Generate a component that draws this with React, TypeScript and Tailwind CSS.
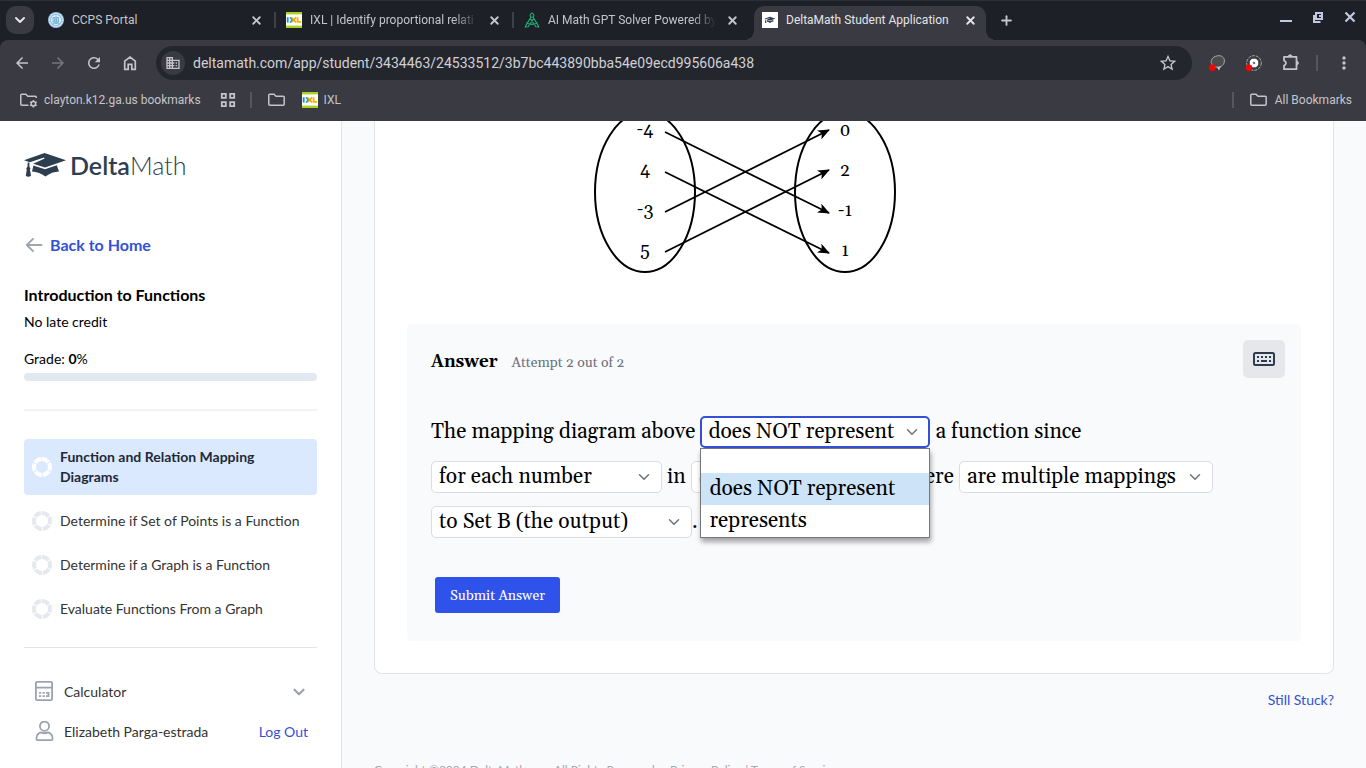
import React, { useState } from "react";
import { ChevronDown, X, Plus } from "lucide-react";
import {
  MdArrowBack,
  MdArrowForward,
  MdRefresh,
  MdStarOutline,
  MdMoreVert,
  MdBusiness,
} from "react-icons/md";

function CcpsIcon() {
  return (
    <svg viewBox="0 0 16 16" className="size-4 shrink-0" aria-hidden="true">
      <circle cx="8" cy="8" r="8" fill="#8fbfe0" />
      <circle cx="8" cy="8" r="6.600" fill="none" stroke="#e6f2fa" strokeWidth="1.200" strokeDasharray="1 0.6" />
      <circle cx="8" cy="8" r="5" fill="#eaf4fb" />
      <path d="M5 5.500h1.800V10H5zM8.800 5.500h1.800V10H8.800zM4.500 11.200h7M8 3.600v8" stroke="#5b9fcf" strokeWidth="0.900" fill="none" />
    </svg>
  );
}

function IxlIcon() {
  return (
    <svg viewBox="0 0 16 16" className="size-4 shrink-0" aria-hidden="true">
      <rect width="16" height="16" fill="#fff" />
      <rect width="16" height="2.400" fill="#a8d420" />
      <rect y="13.600" width="16" height="2.400" fill="#a8d420" />
      <path d="M1.700 5.200v5.400" stroke="#1593d0" strokeWidth="1.800" />
      <path d="M5.200 5.400l5 5M10.200 5.400l-5 5" stroke="#f5a800" strokeWidth="1.700" />
      <path d="M3.800 5.400L6.200 8l-2.400 2.600" stroke="#1593d0" strokeWidth="1.200" fill="none" />
      <path d="M11.600 5.200v4.600h3.400" stroke="#f5b400" strokeWidth="1.800" fill="none" />
    </svg>
  );
}

function CompassIcon() {
  return (
    <svg viewBox="0 0 16 16" className="size-4 shrink-0" fill="none" stroke="#1fae76" strokeWidth="1.100" aria-hidden="true">
      <circle cx="8" cy="3.400" r="1.900" />
      <path d="M8 .4v1.200M7 5L1.200 14.600M9 5l5.800 9.600M6.200 6.400l6 8.800M9.800 6.400l-6 8.800M2.400 10.600c3 2.400 8 2.400 11.200 0M.8 15.200l2.600-.4M15.200 15.200l-2.600-.4" />
    </svg>
  );
}

function CapShape() {
  return (
    <>
      <path d="M0 7.200L20.500 0 42 7.200 21 14.400 9.200 10.700 20.600 5.500 20 4.400 5.800 9.300z" />
      <path d="M9.400 12.400L21 16.200l11.800-4 2.200 6.300c-4.800.2-9.200 1.800-13.600 5-4-3-8.400-4.600-13.400-5z" />
      <path d="M3.800 9.200l1.600.5v4.200c1.300.9 1.300 2 .5 2.700l1.100 6.200c-1.700 1.200-3.800 1.200-5.200 0l1-6.200c-.8-.8-.7-1.900.6-2.700z" />
    </>
  );
}

function DeltaIcon() {
  return (
    <svg viewBox="0 0 16 16" className="size-4 shrink-0" aria-hidden="true">
      <rect width="16" height="16" fill="#fff" />
      <g transform="translate(2.500 4.800) scale(0.260)" fill="#2d3b4e">
        <CapShape />
      </g>
    </svg>
  );
}

function Folder({ gear = false }: { gear?: boolean }) {
  return (
    <svg viewBox="0 0 18 16" className="h-4 w-[18px] shrink-0" fill="none" stroke="#c3c5cb" strokeWidth="1.500" aria-hidden="true">
      {gear ? (
        <>
          <path d="M8.500 13.200H1.800a1 1 0 0 1-1-1V3.300a1 1 0 0 1 1-1h4l2 2h7.400a1 1 0 0 1 1 1V6" />
          <circle cx="13.400" cy="11.800" r="2.200" />
          <path d="M13.400 8v1.600M13.400 14v1.600M10.100 9.900l1.400.8M15.300 12.900l1.400.8M10.100 13.700l1.400-.8M15.300 10.700l1.400-.8" />
        </>
      ) : (
        <path d="M1.800 13.200a1 1 0 0 1-1-1V3.300a1 1 0 0 1 1-1h4.200l2 2h7.200a1 1 0 0 1 1 1v6.900a1 1 0 0 1-1 1z" />
      )}
    </svg>
  );
}

const tabs = [
  { title: "CCPS Portal", icon: <CcpsIcon />, active: false },
  { title: "IXL | Identify proportional relati", icon: <IxlIcon />, active: false },
  { title: "AI Math GPT Solver Powered by", icon: <CompassIcon />, active: false },
  { title: "DeltaMath Student Application", icon: <DeltaIcon />, active: true },
];

function TabStrip() {
  return (
    <div className="flex h-10 items-start border-t border-[#2c2f37] bg-[#1e2027] pl-[6px]">
      <button aria-label="Search tabs" className="mt-[5px] mr-[6px] flex size-7 shrink-0 items-center justify-center rounded-[10px] bg-[#3a3b42] text-[#e3e4e8]">
        <ChevronDown size={16} strokeWidth={3} />
      </button>
      <div className="flex min-w-0 flex-1 items-start">
        {tabs.map((tab, i) => (
          <React.Fragment key={tab.title}>
            <div
              className={
                tab.active
                  ? "relative mt-[5px] flex h-[34px] max-w-[232px] min-w-0 flex-1 items-start rounded-t-[10px] bg-[#3a3b42] px-2 pt-[6px] text-[#e3e4e8]"
                  : "mt-[5px] flex h-[34px] max-w-[232px] min-w-0 flex-1 items-start px-2 pt-[6px] text-[#c3c5cb]"
              }
            >
              {tab.active && (
                <>
                  <span className="absolute bottom-0 -left-[10px] size-[10px] bg-[radial-gradient(circle_at_0_0,transparent_10px,#3a3b42_10px)]" />
                  <span className="absolute -right-[10px] bottom-0 size-[10px] bg-[radial-gradient(circle_at_100%_0,transparent_10px,#3a3b42_10px)]" />
                </>
              )}
              {tab.icon}
              <span
                className={
                  tab.active || i === 0
                    ? "ml-2 flex-1 overflow-hidden text-[12px] leading-4 whitespace-nowrap"
                    : "ml-2 flex-1 overflow-hidden [mask-image:linear-gradient(to_right,#000_calc(100%_-_24px),transparent)] text-[12px] leading-4 whitespace-nowrap"
                }
              >
                {tab.title}
              </span>
              <button aria-label={"Close " + tab.title} className="ml-2 flex size-4 shrink-0 items-center justify-center">
                <X size={13} strokeWidth={3.500} />
              </button>
            </div>
            {i < tabs.length - 1 && (
              <span className={i === 2 ? "mx-[2px] w-[2px] shrink-0" : "mx-[2px] mt-[11px] h-4 w-[2px] shrink-0 bg-[#3f4149]"} />
            )}
          </React.Fragment>
        ))}
        <button aria-label="New tab" className="mt-[11px] ml-3 flex size-4 shrink-0 items-center justify-center text-[#c3c5cb]">
          <Plus size={15} strokeWidth={3} />
        </button>
      </div>
      <div className="flex items-center gap-5 pt-[10px] pr-[10px] text-[#c3c8e0]">
        <button aria-label="Minimize" className="flex h-3 w-3 items-end pb-px">
          <span className="h-[2px] w-full bg-current" />
        </button>
        <button aria-label="Restore">
          <svg viewBox="0 0 12 12" className="size-3" fill="none" stroke="currentColor" strokeWidth="2" aria-hidden="true">
            <path d="M4 2h6v6H4zM2 4v7h6.500M7 5h2" />
          </svg>
        </button>
        <button aria-label="Close window">
          <svg viewBox="0 0 12 12" className="size-3" stroke="currentColor" strokeWidth="2.200" aria-hidden="true">
            <path d="M1.500 1.500l9 9M10.500 1.500l-9 9" />
          </svg>
        </button>
      </div>
    </div>
  );
}

function Toolbar() {
  return (
    <div className="bg-[#1e2027]">
      <div className="flex h-[46px] items-center rounded-t-lg bg-[#3a3b42] pr-3 pl-3 text-[#c3c5cb]">
        <div className="flex items-center gap-4">
          <button aria-label="Back"><MdArrowBack size={20} className="h-5 w-5 p-px" /></button>
          <button aria-label="Forward" className="text-[#74767d]"><MdArrowForward size={20} className="h-5 w-5 p-px" /></button>
          <button aria-label="Reload"><MdRefresh size={20} className="h-5 w-5 p-px" /></button>
          <button aria-label="Home">
            <svg viewBox="0 0 20 20" className="size-5" fill="none" stroke="currentColor" strokeWidth="1.700" aria-hidden="true">
              <path d="M4.700 8.200L10 4l5.300 4.200v8.100h-3.500v-4.900H8.200v4.900H4.700z" />
            </svg>
          </button>
        </div>
        <div className="ml-4 flex h-[34px] flex-1 items-center rounded-full bg-[#24262d] pr-[14px] pl-[5px]">
          <span className="flex size-6 items-center justify-center rounded-full bg-[#3a3b42]">
            <MdBusiness size={16} />
          </span>
          <input
            aria-label="Address"
            readOnly
            value="deltamath.com/app/student/3434463/24533512/3b7bc443890bba54e09ecd995606a438"
            className="ml-2 min-w-0 flex-1 bg-transparent text-[14px] leading-5 text-[#cfd1d6] outline-none"
          />
          <button aria-label="Bookmark this tab"><MdStarOutline size={20} /></button>
        </div>
        <div className="ml-4 flex items-center">
          <button aria-label="Extension one">
            <svg viewBox="0 0 18 18" className="size-[18px]" aria-hidden="true">
              <path d="M9.500 1.800c3.800-.7 7 1.500 6.900 5.200 0 3-1.600 4.200-3.200 5.500l-1.500.6H6.500C3.300 11 2.800 8 3.500 6c.8-2.500 3.600-3.800 6-4.200z" fill="#4a4c50" stroke="#a7a9ac" strokeWidth="1" />
              <path d="M9 13.500l4-1.500-2 4.500z" fill="#c5c7c9" />
              <circle cx="4.300" cy="13.800" r="3.200" fill="#f00" />
            </svg>
          </button>
          <button aria-label="Extension two" className="ml-[18px]">
            <svg viewBox="0 0 18 18" className="size-[18px]" aria-hidden="true">
              <circle cx="10" cy="9" r="7.300" fill="none" stroke="#a7a9ac" strokeWidth="1" strokeDasharray="3 1" />
              <path d="M8 4.800h4l2.200 2.200v4L12 13.200H8L5.800 11V7z" fill="#fff" />
              <circle cx="10" cy="9" r="1.300" fill="#777" />
              <circle cx="5" cy="13.800" r="3.200" fill="#f00" />
            </svg>
          </button>
          <button aria-label="Extensions" className="ml-[18px]">
            <svg viewBox="0 0 20 20" className="size-5" fill="none" stroke="currentColor" strokeWidth="1.800" strokeLinejoin="round" aria-hidden="true">
              <path d="M4 3.800h12.500v12.400H4v-3.600c2.600-.6 2.600-4.400 0-5z" />
              <path d="M8.300 3.200a2 2 0 0 1 3.800 0zM17 8.200a2 2 0 0 1 0 3.800z" fill="currentColor" strokeWidth="1" />
            </svg>
          </button>
          <span className="ml-4 h-4 w-[2px] bg-[#55575e]" />
          <button aria-label="Menu" className="ml-4"><MdMoreVert size={20} /></button>
        </div>
      </div>
      <div className="flex h-[35px] items-start bg-[#3a3b42] pt-[6px] pr-[14px] pl-5 text-[12px] leading-4 text-[#c3c5cb]">
        <a href="#managed" className="flex items-center gap-[6px]"><Folder gear />clayton.k12.ga.us bookmarks</a>
        <button aria-label="Tab groups" className="ml-[19px]">
          <svg viewBox="0 0 16 16" className="size-4" fill="none" stroke="currentColor" strokeWidth="1.800" aria-hidden="true">
            <path d="M1.800 1.800h4v4h-4zM10.200 1.800h4v4h-4zM1.800 10.200h4v4h-4zM10.200 10.200h4v4h-4z" />
          </svg>
        </button>
        <span className="ml-[14px] h-4 w-[2px] bg-[#55575e]" />
        <a href="#folder" aria-label="Folder" className="ml-4"><Folder /></a>
        <a href="#ixl" className="ml-4 flex items-center gap-[6px]"><IxlIcon />IXL</a>
        <span className="ml-auto h-4 w-[2px] bg-[#55575e]" />
        <a href="#all" className="ml-4 flex items-center gap-[7px]"><Folder />All Bookmarks</a>
      </div>
    </div>
  );
}

function Ring({ active }: { active: boolean }) {
  return (
    <svg viewBox="0 0 20 20" className="size-5 shrink-0" aria-hidden="true">
      <circle cx="10" cy="10" r="8" fill="none" stroke={active ? "#ffffff" : "#e5e9ef"} strokeWidth="4" strokeDasharray="7.380 1" transform="rotate(-90 10 10)" />
    </svg>
  );
}

const skills = [
  "Function and Relation Mapping Diagrams",
  "Determine if Set of Points is a Function",
  "Determine if a Graph is a Function",
  "Evaluate Functions From a Graph",
];

function Sidebar() {
  return (
    <aside className="w-[342px] shrink-0 border-r border-[#e0e3e8] bg-white px-6 pt-7 text-[14px] leading-5 text-[#333]">
      <a href="#home" className="flex h-8 items-center text-[#2d3e50]">
        <svg viewBox="0 0 42 24" className="h-6 w-[42px]" fill="currentColor" aria-hidden="true"><CapShape /></svg>
        <span className="ml-1 text-[25px] leading-8"><span className="font-semibold">Delta</span><span className="font-light">Math</span></span>
      </a>
      <a href="#home" className="mt-[52px] flex h-6 items-center text-[16px] leading-6 font-bold text-[#3251d6]">
        <svg viewBox="0 0 20 20" className="size-5 shrink-0" fill="none" stroke="#a0a4ae" strokeWidth="1.900" strokeLinecap="round" strokeLinejoin="round" aria-hidden="true">
          <path d="M17.500 10H3M9 3.800L2.800 10 9 16.200" />
        </svg>
        <span className="ml-[6px]">Back to Home</span>
      </a>
      <h2 className="mt-[26px] text-[16px] leading-6 font-bold text-black">Introduction to Functions</h2>
      <p className="mt-[5px] text-black">No late credit</p>
      <p className="mt-[17px] text-black">Grade: <b>0</b>%</p>
      <div className="mt-1 h-2 rounded-full bg-[#e2e8f0]" />
      <hr className="mt-7 border-t-2 border-[#f1f2f4]" />
      <nav className="mt-7 flex flex-col">
        {skills.map((name, i) => (
          <a
            key={name}
            href={"#skill-" + i}
            className={
              i === 0
                ? "mb-1 flex items-center gap-2 rounded bg-[#dbe9fe] px-2 py-2 pr-12 font-bold text-[#1f2937]"
                : "flex h-11 items-center gap-2 px-2"
            }
          >
            <Ring active={i === 0} />
            <span>{name}</span>
          </a>
        ))}
      </nav>
      <hr className="mt-4 border-t border-[#e0e3e8]" />
      <button className="mt-6 flex h-10 w-full items-center pr-[9px] pl-[10px]">
        <svg viewBox="0 0 20 22" className="h-[22px] w-5 shrink-0" fill="none" stroke="#9ca3af" strokeWidth="1.800" aria-hidden="true">
          <rect x="1.900" y=".9" width="16.200" height="18.200" rx="1.200" />
          <path d="M1.900 6.600h16.200" />
          <path d="M5 11.900h2.200M8.600 11.900h2.200M5 15.100h2.200M8.600 15.100h2.200M12 11.900h3.400M12 15.100h3.400M14.500 11v5" strokeWidth="1.800" />
        </svg>
        <span className="ml-[10px] flex-1 text-left">Calculator</span>
        <ChevronDown size={18} strokeWidth={3} color="#9ca3af" className="shrink-0" />
      </button>
      <div className="flex h-10 items-center pr-[9px] pl-[10px]">
        <svg viewBox="0 0 20 22" className="h-[22px] w-5 shrink-0" fill="none" stroke="#9ca3af" strokeWidth="1.800" aria-hidden="true">
          <circle cx="10.500" cy="5.200" r="4.600" />
          <path d="M2.400 18c0-4 1.400-5.800 4.600-6.600 2.200 1.100 4.800 1.100 7 0 3.200.8 4.600 2.600 4.600 6.600 0 .8-.4 1.200-1.200 1.200H3.600c-.8 0-1.200-.4-1.200-1.200z" />
        </svg>
        <span className="ml-[10px] flex-1">Elizabeth Parga-estrada</span>
        <a href="#logout" className="text-[#3251d6]">Log Out</a>
      </div>
    </aside>
  );
}

const inputs = ["-4", "4", "-3", "5"];
const outputs = ["0", "2", "-1", "1"];
const arrows = [[0, 2], [1, 3], [2, 0], [3, 1]];

function MappingDiagram() {
  return (
    <svg viewBox="0 0 304 156" role="img" aria-label="Mapping diagram" className="ml-[186px] block h-[156px] w-[304px] font-['Gelasio','Georgia','Liberation_Serif',serif] text-[18px]">
      <defs>
        <marker id="head" viewBox="0 0 12 10" refX="11" refY="5" markerWidth="12" markerHeight="10" markerUnits="userSpaceOnUse" orient="auto">
          <path d="M0 0l12 5-12 5 3-5z" />
        </marker>
      </defs>
      <g fill="none" stroke="#000" strokeWidth="2">
        <ellipse cx="52" cy="71" rx="50" ry="80" />
        <ellipse cx="252" cy="71" rx="50" ry="80" />
        {arrows.map(([a, b]) => (
          <line key={a} x1="72" y1={11 + a * 40} x2="236" y2={10 + b * 40 + (b > a ? 2 : -1)} markerEnd="url(#head)" strokeWidth="1.800" />
        ))}
      </g>
      {inputs.map((t, i) => (
        <text key={t} x="52" y={14 + i * 40} textAnchor="middle">{t}</text>
      ))}
      {outputs.map((t, i) => (
        <text key={t} x="252" y={15 + i * 40} textAnchor="middle">{t}</text>
      ))}
    </svg>
  );
}

function Blank({ label, value, options, width, open = false }: { label: string; value: string; options: string[]; width: string; open?: boolean }) {
  const [current, setCurrent] = useState(value);
  return (
    <span className={"relative inline-block leading-none " + width}>
      <select
        aria-label={label}
        value={current}
        onChange={(e) => setCurrent(e.target.value)}
        className={
          open
            ? "h-8 w-full appearance-none rounded-[5px] border-2 border-[#3251d6] bg-white pl-[6px] leading-7 outline-none"
            : "h-8 w-full appearance-none rounded-[5px] border border-[#d9dce1] bg-white pl-[7px] leading-7 outline-none"
        }
      >
        {options.map((o) => <option key={o} value={o}>{o}</option>)}
      </select>
      <ChevronDown size={18} strokeWidth={2} color="#6b7280" className="pointer-events-none absolute top-[7px] right-[9px]" />
      {open && (
        <span role="listbox" aria-label={label} className="absolute top-full left-0 z-10 block w-full border border-[#767676] bg-white leading-8 shadow-[1px_4px_5px_rgba(0,0,0,0.35)]">
          <span role="option" aria-selected="false" aria-label="blank" className="block h-6" />
          <span role="option" aria-selected="true" className="block h-8 bg-[#cce3f8] px-2">does NOT represent</span>
          <span role="option" aria-selected="false" className="block h-8 px-2">represents</span>
        </span>
      )}
    </span>
  );
}

function Question() {
  return (
    <main className="min-w-0 flex-1 bg-[#f9fafc] px-8 text-[14px] leading-5">
      <section className="rounded-b-lg border border-t-0 border-[#e0e3e8] bg-white px-8 pb-8">
        <MappingDiagram />
        <div className="mt-[47px] rounded bg-[#f9fafc] pt-4 pr-4 pb-7 pl-6 font-['Gelasio','Georgia','Liberation_Serif',serif]">
          <div className="flex items-start">
            <h3 className="mt-2 text-[17px] leading-7 font-bold text-black">Answer</h3>
            <span className="mt-[13px] ml-[14px] text-[14px] leading-5 text-[#6b7280]">Attempt 2 out of 2</span>
            <button aria-label="Keyboard" className="ml-auto flex h-[38px] w-[42px] items-center justify-center rounded-[5px] bg-[#e5e7eb]">
              <svg viewBox="0 0 22 14" className="h-[14px] w-[22px]" aria-hidden="true">
                <rect x="1" y="1" width="20" height="12" rx="1.500" fill="none" stroke="#2d3b4e" strokeWidth="2" />
                <path d="M4 5h2M8 5h2M12 5h2M16 5h2M4 9h2M8 9h6M16 9h2" stroke="#2d3b4e" strokeWidth="2" />
              </svg>
            </button>
          </div>
          <p className="mt-[32px] text-[21px] leading-[45px] text-black">
            The mapping diagram above{" "}
            <Blank label="Represents" value="does NOT represent" options={["", "does NOT represent", "represents"]} width="w-[230px]" open />{" "}
            a function since{" "}
            <Blank label="Quantity" value="for each number" options={["", "for each number"]} width="w-[231px]" /> in{" "}
            <Blank label="First set" value="Set A (the input)" options={["", "Set A (the input)"]} width="w-[204px]" />, there{" "}
            <Blank label="Mappings" value="are multiple mappings" options={["", "are multiple mappings"]} width="w-[254px]" />{" "}
            <Blank label="Second set" value="to Set B (the output)" options={["", "to Set B (the output)"]} width="w-[261px]" />.
          </p>
          <button className="mt-8 ml-1 block h-9 rounded-[3px] bg-[#2f52ea] px-[15px] pt-px text-[14px] leading-5 text-white">Submit Answer</button>
        </div>
      </section>
      <div className="mt-4 text-right">
        <a href="#help" className="text-[#3251d6]">Still Stuck?</a>
      </div>
      <footer className="mt-[50px] text-[12px] leading-5 whitespace-nowrap text-[#a3a7b0]">
        Copyright ©2024 DeltaMath.com All Rights Reserved. &nbsp;&nbsp; <a href="#privacy">Privacy Policy</a> | <a href="#terms">Terms of Service</a>
      </footer>
    </main>
  );
}

export default function App() {
  return (
    <div className="flex h-screen flex-col overflow-hidden bg-white">
      <header className="shrink-0 font-['Roboto',sans-serif]">
        <TabStrip />
        <Toolbar />
      </header>
      <div className="flex min-h-0 flex-1 overflow-hidden font-['Lato',sans-serif]">
        <Sidebar />
        <Question />
      </div>
    </div>
  );
}
